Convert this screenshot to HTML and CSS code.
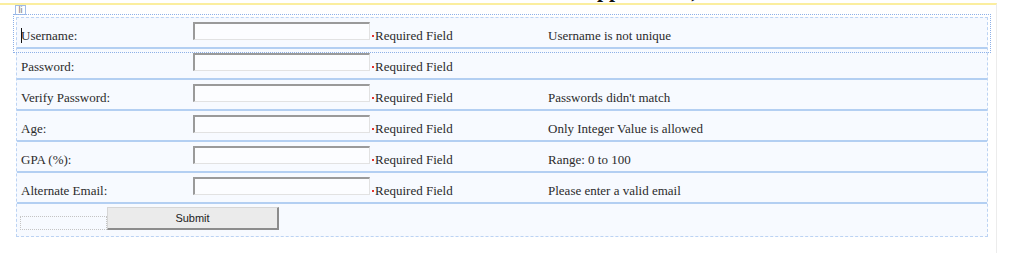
FILE: index.html
```html
<!DOCTYPE html>
<html lang="en">
<head>
    <meta charset="UTF-8">
    <title>Registration</title>
    <link rel="stylesheet" href="styles.css">
</head>
<body>

    <div class="title-clip">
        <div class="title">Application)</div>
    </div>

    <div class="surface">
        <div class="tag">li</div>

        <div class="form">
            <div class="row selected">
                <div class="label"><span class="caret"></span>Username:</div>
                <div class="field"><input type="text"></div>
                <div class="req"><span class="dot"></span>Required Field</div>
                <div class="msg">Username is not unique</div>
            </div>
            <div class="row">
                <div class="label">Password:</div>
                <div class="field"><input type="password"></div>
                <div class="req"><span class="dot"></span>Required Field</div>
                <div class="msg"></div>
            </div>
            <div class="row">
                <div class="label">Verify Password:</div>
                <div class="field"><input type="password"></div>
                <div class="req"><span class="dot"></span>Required Field</div>
                <div class="msg">Passwords didn't match</div>
            </div>
            <div class="row">
                <div class="label">Age:</div>
                <div class="field"><input type="text"></div>
                <div class="req"><span class="dot"></span>Required Field</div>
                <div class="msg">Only Integer Value is allowed</div>
            </div>
            <div class="row">
                <div class="label">GPA (%):</div>
                <div class="field"><input type="text"></div>
                <div class="req"><span class="dot"></span>Required Field</div>
                <div class="msg">Range: 0 to 100</div>
            </div>
            <div class="row">
                <div class="label">Alternate Email:</div>
                <div class="field"><input type="text"></div>
                <div class="req"><span class="dot"></span>Required Field</div>
                <div class="msg">Please enter a valid email</div>
            </div>
            <div class="submit-row">
                <div class="spacer"></div>
                <button>Submit</button>
            </div>
        </div>
    </div>

</body>
</html>
```

FILE: styles.css
```css
body {
    margin: 0;
    font-family: "Liberation Serif", "Times New Roman", serif;
    font-size: 13px;
    color: #2b2b2b;
    background: #fff;
}
.title-clip {
    height: 3px;
    overflow: hidden;
}
.title {
    margin-top: -21px;
    padding-left: 581px;
    font-size: 22px;
    font-weight: bold;
    line-height: 22px;
    white-space: nowrap;
    color: #111;
}
.surface {
    width: 996px;
    height: 248px;
    border-top: 2px solid #fbee9f;
    border-right: 1px solid #ececec;
}
.tag {
    margin-left: 15px;
    width: 11px;
    height: 10px;
    box-sizing: border-box;
    border: 1px solid #a2bde6;
    font-family: "Liberation Sans", Arial, sans-serif;
    font-size: 9px;
    line-height: 8px;
    text-align: center;
    color: #777;
}
.form {
    margin: 2px 0 0 16px;
    width: 972px;
    box-sizing: border-box;
    border: 1px dashed #bcd3f3;
    background: #f7faff;
}
.row {
    display: grid;
    grid-template-columns: 176px 177px 178px 1fr;
    height: 29px;
    border-bottom: 2px solid #b3cff2;
}
.row.selected {
    outline: 1px dotted #8db0e8;
    outline-offset: 3px;
}
.label {
    padding: 9px 0 0 4px;
    line-height: 18px;
    white-space: nowrap;
}
.caret {
    display: inline-block;
    width: 1px;
    height: 15px;
    margin-right: -1px;
    vertical-align: -3px;
    background: #111;
}
.field {
    padding-top: 4px;
}
.field input {
    display: block;
    width: 177px;
    height: 18px;
    box-sizing: border-box;
    margin: 0;
    padding: 0;
    border-style: solid;
    border-width: 2px 1px 1px 2px;
    border-color: #9a9a9a #e2e2e2 #e2e2e2 #9a9a9a;
    background: #fcfdff;
}
.req {
    padding: 9px 0 0 2px;
    line-height: 18px;
    white-space: nowrap;
}
.dot {
    display: inline-block;
    width: 2px;
    height: 2px;
    margin-right: 1px;
    vertical-align: 3px;
    background: #e5322d;
}
.msg {
    padding-top: 9px;
    line-height: 18px;
    white-space: nowrap;
}
.submit-row {
    display: flex;
    align-items: flex-end;
    height: 32px;
    box-sizing: border-box;
    padding: 0 0 6px 3px;
}
.spacer {
    width: 87px;
    height: 14px;
    box-sizing: border-box;
    border: 1px dotted #c4c4c4;
}
button {
    width: 172px;
    height: 23px;
    margin: 0;
    padding: 0;
    font-family: "Liberation Sans", Arial, sans-serif;
    font-size: 11px;
    color: #222;
    background: #ebebeb;
    border-style: solid;
    border-width: 1px 2px 2px 1px;
    border-color: #d6d6d6 #8c8c8c #8c8c8c #d6d6d6;
}
```
